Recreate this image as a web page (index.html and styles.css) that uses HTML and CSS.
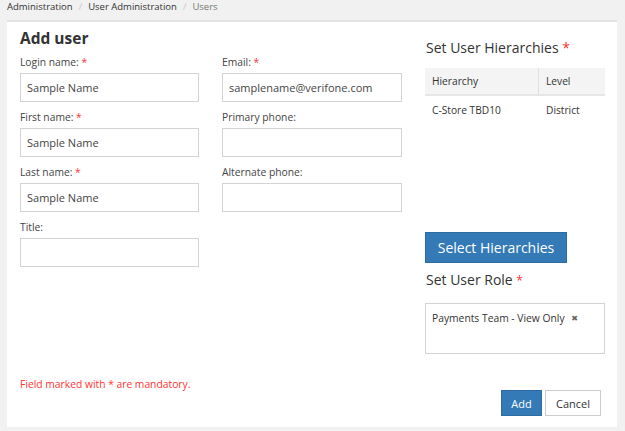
FILE: index.html
```html
<!DOCTYPE html>
<html>
<head>
<meta charset="utf-8">
<link rel="stylesheet" href="styles.css">
</head>
<body>
<div class="page">
  <nav class="crumbs">
    <span class="crumb">Administration</span><span class="sep">/</span><span class="crumb">User Administration</span><span class="sep">/</span><span class="crumb current">Users</span>
  </nav>
  <div class="card">
    <div class="body">
      <div class="form">
        <h1 class="title">Add user</h1>
        <div class="grid">
          <div class="field">
            <label class="label">Login name: <span class="req">*</span></label>
            <div class="input">Sample Name</div>
          </div>
          <div class="field">
            <label class="label">Email: <span class="req">*</span></label>
            <div class="input">samplename@verifone.com</div>
          </div>
          <div class="field">
            <label class="label">First name: <span class="req">*</span></label>
            <div class="input">Sample Name</div>
          </div>
          <div class="field">
            <label class="label">Primary phone:</label>
            <div class="input"></div>
          </div>
          <div class="field">
            <label class="label">Last name: <span class="req">*</span></label>
            <div class="input">Sample Name</div>
          </div>
          <div class="field">
            <label class="label">Alternate phone:</label>
            <div class="input"></div>
          </div>
          <div class="field">
            <label class="label">Title:</label>
            <div class="input"></div>
          </div>
        </div>
      </div>
      <div class="side">
        <h2 class="side-head">Set User Hierarchies <span class="req">*</span></h2>
        <div class="table-wrap">
          <div class="trow thead">
            <div class="c1">Hierarchy</div>
            <div class="c2">Level</div>
          </div>
          <div class="trow">
            <div class="c1">C-Store TBD10</div>
            <div class="c2">District</div>
          </div>
        </div>
        <button class="btn primary big">Select Hierarchies</button>
        <h2 class="side-head role-head">Set User Role <span class="req small">*</span></h2>
        <div class="role-box">
          <span class="tag">Payments Team - View Only <span class="x">&#x2716;</span></span>
        </div>
      </div>
    </div>
    <div class="footer">
      <div class="note">Field marked with * are mandatory.</div>
      <div class="actions">
        <button class="btn primary">Add</button>
        <button class="btn default">Cancel</button>
      </div>
    </div>
  </div>
</div>
</body>
</html>
```
FILE: styles.css
```css
* { box-sizing: border-box; }
html, body { margin: 0; padding: 0; }
body {
  background: #f1f1f1;
  font-family: "Open Sans", "DejaVu Sans", sans-serif;
  color: #333;
  width: 625px;
  height: 431px;
  overflow: hidden;
}
.page { padding-left: 7px; }
.crumbs {
  height: 20px;
  padding-top: 0;
  font-size: 9.5px;
  line-height: 13px;
  color: #333;
}
.sep { color: #c8c8c8; margin: 0 6px; }
.crumb.current { color: #777; }
.card {
  width: 610px;
  height: 407px;
  background: #fff;
  border-top: 2px solid #e3e3e3;
  padding: 5px 12px 11px 13px;
  display: flex;
  flex-direction: column;
}
.body { display: flex; gap: 23px; }
.form { width: 382px; flex: none; }
.title {
  margin: 0;
  font-size: 15.5px;
  line-height: 22px;
  font-weight: 700;
  color: #333;
}
.grid {
  margin-top: 5px;
  display: grid;
  grid-template-columns: 179px 180px;
  column-gap: 23px;
}
.field { height: 55px; }
.label {
  display: block;
  font-size: 10.3px;
  line-height: 16px;
  color: #444;
  margin-bottom: 3px;
}
.req { color: #f33; }
.input {
  height: 29px;
  border: 1px solid #d3d3d3;
  padding: 0 6px;
  font-size: 11px;
  line-height: 27px;
  color: #444;
}
.side { width: 180px; flex: none; padding-top: 11px; }
.side-head {
  margin: 0;
  padding-left: 1px;
  font-size: 14px;
  line-height: 20px;
  font-weight: 400;
  color: #333;
}
.table-wrap {
  margin-top: 10px;
  height: 164px;
  font-size: 10.2px;
  color: #333;
}
.trow { display: flex; height: 28px; align-items: center; }
.thead {
  background: #f4f4f4;
  border-bottom: 2px solid #e6e6e6;
}
.thead .c1 { border-right: 1px solid #e0e0e0; }
.c1 { width: 114px; padding-left: 7px; height: 100%; display: flex; align-items: center; }
.c2 { padding-left: 7px; }
.btn {
  font-family: inherit;
  border-radius: 0;
  cursor: pointer;
  border: 1px solid transparent;
}
.primary { background: #337ab7; color: #fff; border-color: #2e6da4; }
.big {
  display: block;
  height: 31px;
  width: 142px;
  padding: 0;
  font-size: 14px;
}
.role-head { margin-top: 7px; }
.req.small { font-size: 12px; }
.role-box {
  margin-top: 12px;
  height: 51px;
  border: 1px solid #d3d3d3;
  padding: 6px 6px;
  font-size: 10.3px;
  line-height: 16px;
  color: #333;
}
.x { color: #666; font-size: 8px; margin-left: 4px; vertical-align: 1px; }
.footer {
  margin-top: auto;
  padding-right: 4px;
  display: flex;
  justify-content: space-between;
  align-items: flex-start;
}
.note {
  font-size: 10.3px;
  line-height: 16px;
  color: #f33;
}
.actions { display: flex; gap: 3px; margin-top: 14px; }
.actions .btn {
  height: 26px;
  font-size: 11px;
  padding: 0;
}
.actions .primary { width: 41px; }
.default { width: 56px; background: #fff; color: #333; border-color: #ccc; }
```
